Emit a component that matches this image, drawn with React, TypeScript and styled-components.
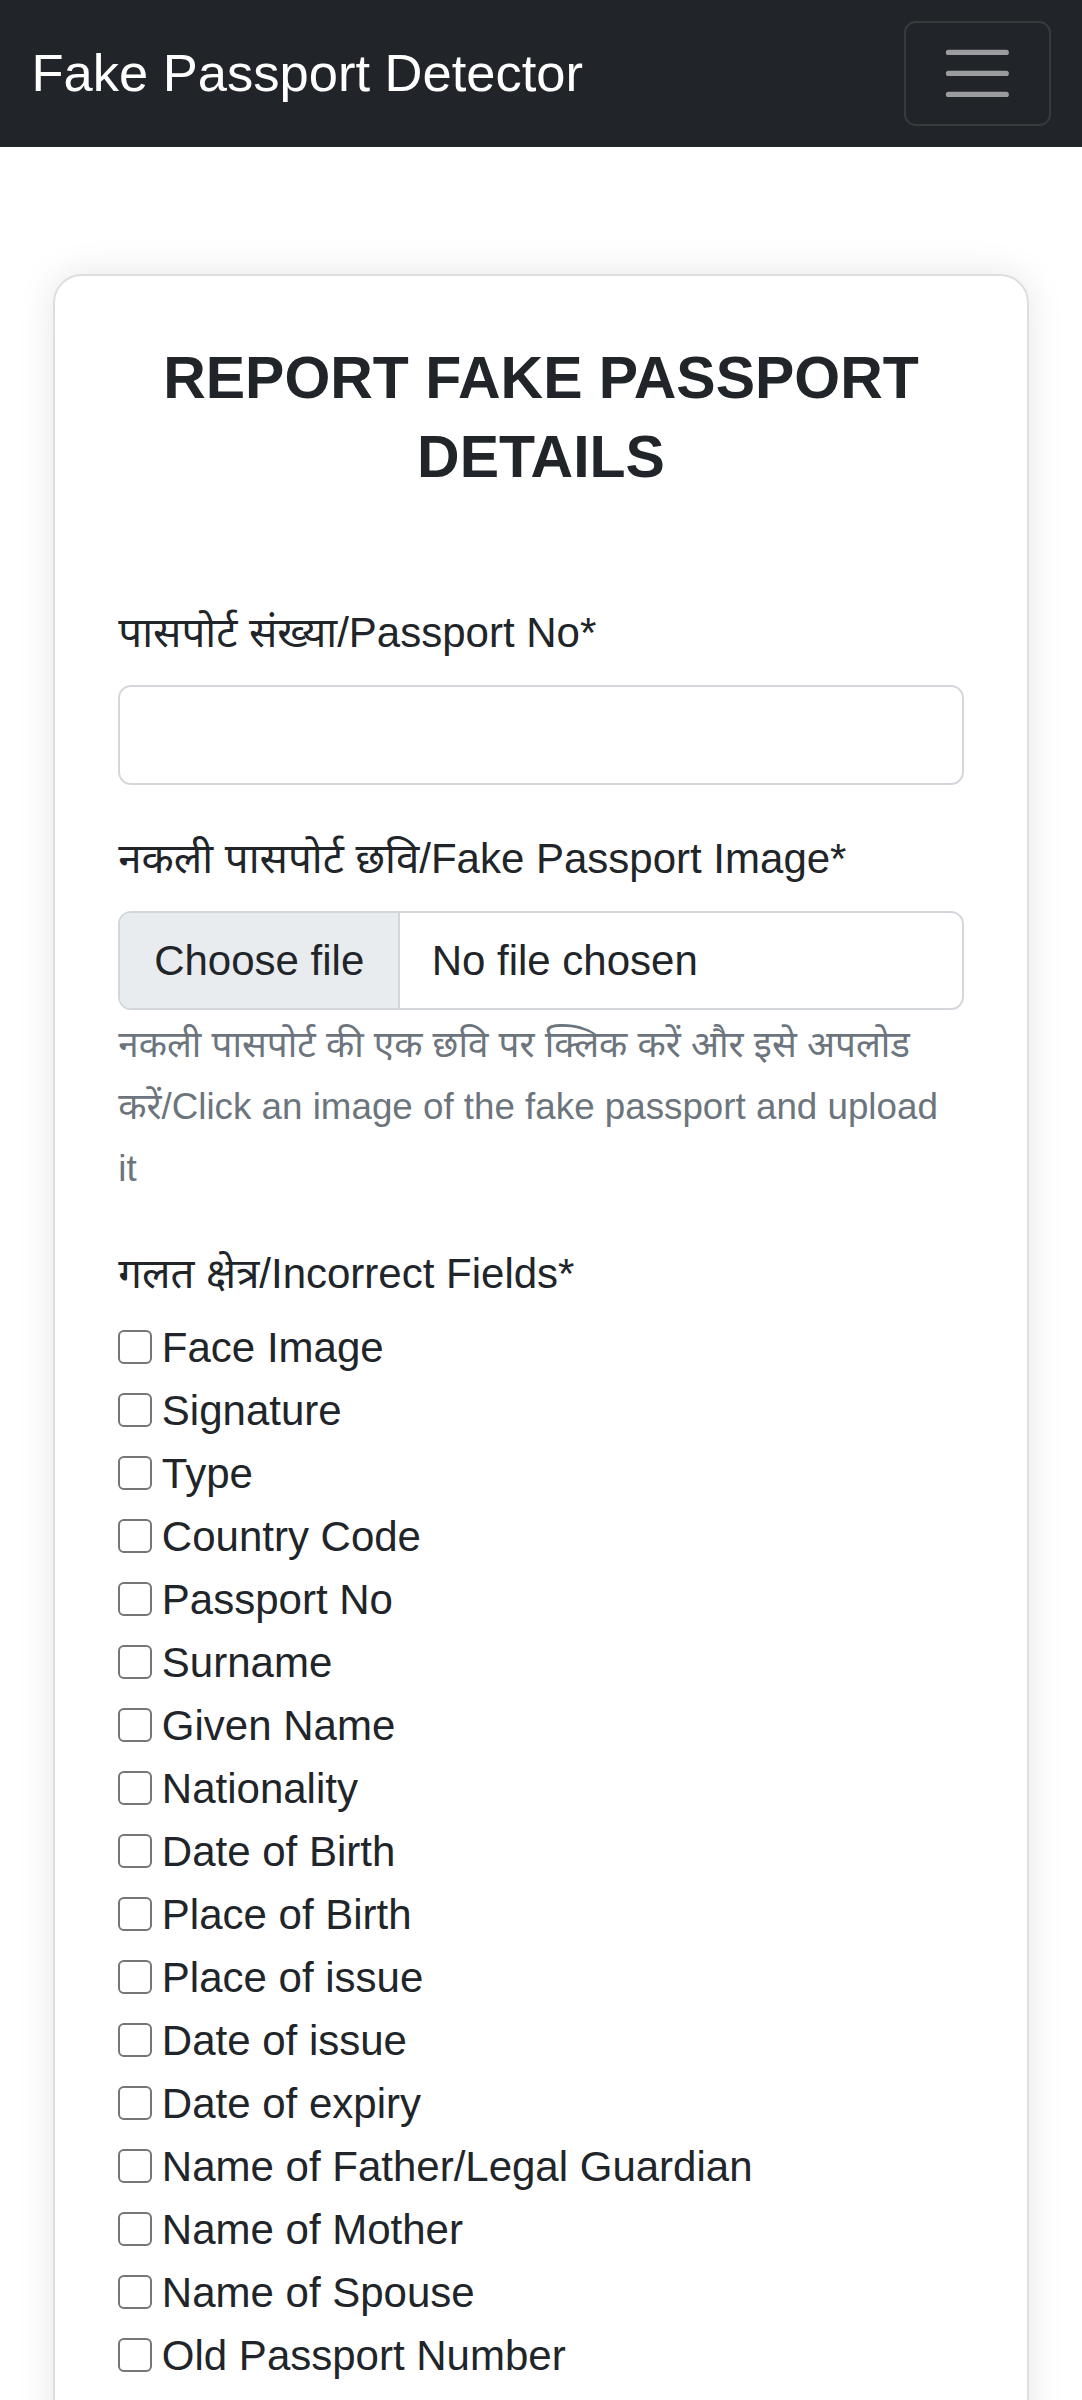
import React from "react";
import styled, { createGlobalStyle } from "styled-components";

const S = 2.625;
const px = (n: number) => `${(n * S).toFixed(2)}px`;

const Global = createGlobalStyle`
  html, body { margin: 0; padding: 0; background: #ffffff; }
  body {
    font-family: "Liberation Sans", "Noto Sans Devanagari", "Lohit Devanagari", "Noto Sans", sans-serif;
    font-size: ${px(16)};
    line-height: 1.5;
    color: #212529;
  }
  * { box-sizing: border-box; }
`;

const Navbar = styled.nav`
  background: #212529;
  height: ${px(56)};
  padding: 0 ${px(12)};
  display: flex;
  align-items: center;
  justify-content: space-between;
`;

const Brand = styled.a`
  color: #ffffff;
  font-size: ${px(20)};
  line-height: ${px(30)};
  text-decoration: none;
`;

const Toggler = styled.button`
  width: ${px(56)};
  height: ${px(40)};
  border: ${px(1)} solid rgba(255, 255, 255, 0.1);
  border-radius: ${px(4.5)};
  background: transparent;
  padding: 0;
  display: flex;
  align-items: center;
  justify-content: center;
  cursor: pointer;
`;

const Main = styled.main`
  padding: ${px(48.5)} ${px(20.3)} ${px(40)};
`;

const Card = styled.section`
  background: #ffffff;
  border: ${px(1)} solid #dedede;
  border-radius: ${px(11)};
  box-shadow: 0 0 ${px(14)} rgba(0, 0, 0, 0.1);
  padding: ${px(24)};
`;

const Title = styled.h2`
  margin: 0 0 ${px(40)};
  text-align: center;
  font-size: ${px(22.46)};
  line-height: ${px(29.8)};
  font-weight: 700;
  color: #212529;
`;

const Field = styled.div`
  margin-bottom: ${px(16)};
`;

const Label = styled.label<{ $gap?: number }>`
  display: block;
  margin-bottom: ${(p) => px(p.$gap ?? 8)};
  line-height: ${px(24)};
`;

const TextInput = styled.input`
  display: block;
  width: 100%;
  height: ${px(38)};
  padding: ${px(6)} ${px(12)};
  font: inherit;
  color: #212529;
  border: ${px(1)} solid #d3d7dc;
  border-radius: ${px(5)};
  background: #ffffff;
  outline: none;
`;

const FileBox = styled.label`
  display: flex;
  align-items: center;
  width: 100%;
  height: ${px(38)};
  border: ${px(1)} solid #d3d7dc;
  border-radius: ${px(5)};
  overflow: hidden;
  cursor: pointer;
  line-height: ${px(24)};
  input { display: none; }
`;

const FileButton = styled.span`
  align-self: stretch;
  display: flex;
  align-items: center;
  padding: 0 ${px(12.9)};
  background: #e9ecef;
  border-right: ${px(1)} solid #d3d7dc;
  color: #212529;
`;

const FileName = styled.span`
  margin-left: ${px(12)};
  color: #212529;
`;

const Help = styled.div`
  margin-top: ${px(1.6)};
  font-size: ${px(14)};
  line-height: ${px(23.6)};
  color: #6c757d;
`;

const CheckList = styled.div`
  display: flex;
  flex-direction: column;
`;

const CheckRow = styled.label`
  display: flex;
  align-items: center;
  height: ${px(24)};
  line-height: ${px(24)};
  cursor: pointer;
`;

const Box = styled.input`
  appearance: none;
  -webkit-appearance: none;
  flex: none;
  width: ${px(13)};
  height: ${px(13)};
  margin: 0 ${px(3.6)} 0 0;
  border: ${px(1)} solid #767676;
  border-radius: ${px(2.2)};
  background: #ffffff;
  &:checked {
    background: #0075ff;
    border-color: #0075ff;
  }
`;

const fields = [
  "Face Image",
  "Signature",
  "Type",
  "Country Code",
  "Passport No",
  "Surname",
  "Given Name",
  "Nationality",
  "Date of Birth",
  "Place of Birth",
  "Place of issue",
  "Date of issue",
  "Date of expiry",
  "Name of Father/Legal Guardian",
  "Name of Mother",
  "Name of Spouse",
  "Old Passport Number",
];

export default function App() {
  return (
    <>
      <Global />
      <Navbar>
        <Brand href="#">Fake Passport Detector</Brand>
        <Toggler aria-label="Toggle navigation">
          <svg width={px(30)} height={px(30)} viewBox="0 0 30 30">
            <path
              d="M4 7h22M4 15h22M4 23h22"
              stroke="rgba(255,255,255,0.55)"
              strokeWidth="2"
              strokeLinecap="round"
              strokeMiterlimit="10"
            />
          </svg>
        </Toggler>
      </Navbar>
      <Main>
        <Card>
          <Title>REPORT FAKE PASSPORT DETAILS</Title>
          <Field>
            <Label htmlFor="pno">पासपोर्ट संख्या/Passport No*</Label>
            <TextInput id="pno" type="text" />
          </Field>
          <Field>
            <Label>नकली पासपोर्ट छवि/Fake Passport Image*</Label>
            <FileBox>
              <input type="file" accept="image/*" />
              <FileButton>Choose file</FileButton>
              <FileName>No file chosen</FileName>
            </FileBox>
            <Help>
              नकली पासपोर्ट की एक छवि पर क्लिक करें और इसे अपलोड करें/Click an image of the fake passport and upload it
            </Help>
          </Field>
          <Field>
            <Label $gap={4}>गलत क्षेत्र/Incorrect Fields*</Label>
            <CheckList>
              {fields.map((f) => (
                <CheckRow key={f}>
                  <Box type="checkbox" />
                  {f}
                </CheckRow>
              ))}
            </CheckList>
          </Field>
        </Card>
      </Main>
    </>
  );
}
